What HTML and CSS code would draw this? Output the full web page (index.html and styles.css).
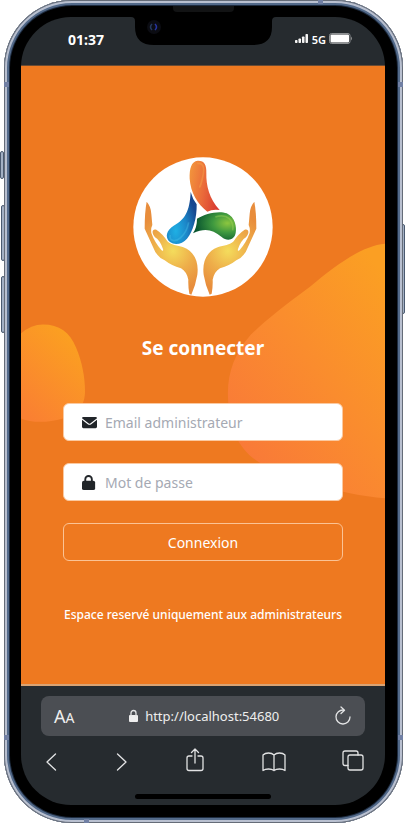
FILE: index.html
```html
<!DOCTYPE html>
<html lang="fr">
<head>
<meta charset="utf-8">
<meta name="viewport" content="width=device-width, initial-scale=1">
<title>Se connecter</title>
<link rel="stylesheet" href="styles.css">
</head>
<body>
<div class="phone">
  <span class="key key-mute"></span>
  <span class="key key-up"></span>
  <span class="key key-down"></span>
  <span class="key key-power"></span>
  <div class="frame">
    <span class="band band-tl"></span><span class="band band-tr"></span>
    <span class="band band-bl"></span><span class="band band-br"></span>
    <span class="band band-top"></span><span class="band band-bottom"></span>
    <div class="notch">
      <svg viewBox="0 0 145 46" aria-hidden="true">
        <path d="M0 17V6H145V17Q141 17 141 21V27Q141 45 122 45H23Q4 45 4 27V21Q4 17 0 17Z" fill="#000"/>
        <path d="M42 6H103V8Q103 12 99 12H46Q42 12 42 8Z" fill="#121314"/>
        <circle cx="23" cy="27" r="7" fill="#0b0c12"/>
        <path d="M21 24Q18 27 21 30" fill="none" stroke="#26395c" stroke-width="1.5"/>
        <path d="M24 24Q27 27 24 30" fill="none" stroke="#2634a0" stroke-width="1.5"/>
      </svg>
    </div>
    <div class="screen">
      <header class="status">
        <span class="clock">01:37</span>
        <span class="signals">
          <svg width="14" height="10" viewBox="0 0 14 10" fill="#f4f4f4" aria-hidden="true"><rect x="0" y="6" width="2.500" height="3" rx=".7"/><rect x="3.500" y="4.500" width="2.500" height="4.500" rx=".7"/><rect x="7" y="2.500" width="2.500" height="6.500" rx=".7"/><rect x="10.500" y="0" width="2.500" height="9" rx=".7"/></svg>
          <span>5G</span>
          <svg width="24" height="12" viewBox="0 0 24 12" aria-hidden="true"><rect x=".5" y=".5" width="20.500" height="10" rx="2" fill="none" stroke="#8d9092"/><rect x="1.500" y="1.500" width="18.500" height="8" rx="1" fill="#fff"/><path d="M22 3.500Q24 5.500 22 7.500Z" fill="#8d9092"/></svg>
        </span>
      </header>

      <main class="page">
        <svg class="blobs" viewBox="0 0 364 619" preserveAspectRatio="none" aria-hidden="true">
          <defs>
            <linearGradient id="big" x1=".85" y1="0" x2=".15" y2=".85"><stop offset="0" stop-color="#fb9f23"/><stop offset="1" stop-color="#f97a38"/></linearGradient>
            <linearGradient id="small" x1=".8" y1="0" x2=".2" y2="1"><stop offset="0" stop-color="#fba31f"/><stop offset="1" stop-color="#fa8032"/></linearGradient>
          </defs>
          <path fill="url(#big)" d="M364 178C342 180 318 197 289 221C262 241 243 256 230 269C213 288 206 309 207 332C208 364 218 384 238 397C262 411 320 430 364 433Z"/>
          <path fill="url(#small)" d="M0 268Q10 259 22 259C38 259 49 267 55 282C61 296 64 312 64 326C64 342 54 350 42 353C25 358 10 357 0 353Z"/>
        </svg>

        <svg class="logo" viewBox="25 36 420 420" role="img" aria-label="Logo">
          <defs>
            <linearGradient id="red" x1="0" y1=".3" x2="1" y2=".6"><stop offset="0" stop-color="#f2923c"/><stop offset=".5" stop-color="#ea6a3a"/><stop offset="1" stop-color="#d93b31"/></linearGradient>
            <radialGradient id="blue" cx=".3" cy=".75" r=".75"><stop offset="0" stop-color="#1fb0e4"/><stop offset=".5" stop-color="#1b86c8"/><stop offset="1" stop-color="#17478f"/></radialGradient>
            <radialGradient id="green" cx=".8" cy=".4" r=".75"><stop offset="0" stop-color="#8cc63f"/><stop offset=".45" stop-color="#3f993f"/><stop offset="1" stop-color="#09552f"/></radialGradient>
            <radialGradient id="gold" gradientUnits="userSpaceOnUse" cx="145" cy="318" r="120"><stop offset="0" stop-color="#f4dc5c"/><stop offset=".5" stop-color="#eeae4a"/><stop offset="1" stop-color="#e88d3c"/></radialGradient>
            <g id="hand">
              <path fill="url(#gold)" d="M66 170Q79 184 80 207L83 240Q78 250 80 264Q90 292 110 315C113 319 117 318 115 312Q106 286 91 277C79 263 83 250 95 254Q116 268 128 289C139 300 157 301 176 307C209 320 223 350 218 389Q213 420 200 449L194 446Q190 424 191 404Q186 380 169 370Q140 362 120 346Q95 335 85 306Q73 279 60 251Q60 201 66 170Z"/>
            </g>
          </defs>
          <circle cx="235" cy="246" r="209" fill="#fff"/>
          <path fill="url(#red)" d="M219 47C239 46 246 60 245 84C244 121 254 162 285 195Q263 192 248 200C218 176 198 143 195 101C194 71 200 49 219 47Z"/>
          <path d="M218 56C238 51 240 73 234 96C231 112 229 119 224 128" fill="none" stroke="#f9b24d" stroke-width="5" opacity=".35"/>
          <path fill="url(#blue)" d="M198 141Q204 163 216 178C217 218 205 260 187 281C173 297 151 302 136 291C119 276 126 255 147 242C181 224 195 199 198 141Z"/>
          <path d="M137 270C131 287 152 293 168 278Q187 260 192 232" fill="none" stroke="#5ad0ee" stroke-width="5" opacity=".3"/>
          <path fill="url(#green)" d="M205 265Q217 247 217 221C241 206 283 196 306 205C331 216 337 247 333 264C329 286 307 290 291 276C263 254 242 248 205 265Z"/>
          <path d="M272 216Q298 208 313 220Q328 233 324 256" fill="none" stroke="#a6d85b" stroke-width="5" opacity=".4"/>
          <use href="#hand"/>
          <use href="#hand" transform="translate(455 0) scale(-1 1)"/>
        </svg>

        <h1>Se connecter</h1>

        <form class="login">
          <label class="field">
            <svg width="15" height="15" viewBox="0 0 16 16" aria-hidden="true"><path fill="#212529" d="M1.500 2h13Q16 2 16 3.500L8.800 9Q8 9.500 7.200 9L0 3.500Q0 2 1.500 2ZM0 5l6.500 5Q8 11 9.500 10L16 5v7.500Q16 14 14.500 14h-13Q0 14 0 12.500Z"/></svg>
            <input type="email" placeholder="Email administrateur" aria-label="Email administrateur">
          </label>
          <label class="field">
            <svg width="15" height="15" viewBox="0 0 16 16" aria-hidden="true"><rect x="0" y="6" width="14" height="10" rx="2" fill="#212529"/><path d="M3.500 7V4.500a3.500 3.500 0 0 1 7 0V7" fill="none" stroke="#212529" stroke-width="2"/></svg>
            <input type="password" placeholder="Mot de passe" aria-label="Mot de passe">
          </label>
          <button type="submit" class="submit">Connexion</button>
        </form>

        <p class="note">Espace reservé uniquement aux administrateurs</p>
      </main>

      <footer class="browser">
        <div class="address">
          <button type="button" class="text-size" aria-label="Taille du texte">A<small>A</small></button>
          <span class="url"><svg width="10" height="14" viewBox="0 0 10 14" aria-hidden="true"><rect x="0" y="6" width="9" height="7" rx="1" fill="#eee"/><path d="M2 7V4a2.500 2.500 0 0 1 5 0v3"/></svg>http://localhost:54680</span>
          <button type="button" aria-label="Actualiser"><svg width="18" height="20" viewBox="0 0 18 20" aria-hidden="true"><path d="M9.500 4A7 7 0 1 0 16 11M7 1l3.500 3.200L7 7.500"/></svg></button>
        </div>
        <nav class="tools">
          <button type="button" aria-label="Précédent"><svg width="14" height="24" viewBox="5 0 14 24"><path d="M15.500 4L7 12l8.500 8"/></svg></button>
          <button type="button" aria-label="Suivant"><svg width="14" height="24" viewBox="5 0 14 24"><path d="M8.500 4L17 12l-8.500 8"/></svg></button>
          <button type="button" aria-label="Partager"><svg width="24" height="24" viewBox="0 0 24 24"><path d="M9 6H6Q4 6 4 8v10.500q0 2 2 2h12q2 0 2-2V8q0-2-2-2h-3M12 13V-1M8.500 2.500L12-1l3.500 3.500"/></svg></button>
          <button type="button" aria-label="Signets"><svg width="24" height="24" viewBox="0 0 24 24"><path d="M12 20.500V5Q10 3 6.500 3T1 5v15.500q2-1.500 5.500-1.500t5.500 1.500ZM12 5q2-2 5.500-2T23 5v15.500q-2-1.500-5.500-1.500T12 20.500"/></svg></button>
          <button type="button" aria-label="Onglets"><svg width="24" height="24" viewBox="0 0 24 24"><rect x="7" y="5" width="15" height="15" rx="2"/><path d="M7 15.500H4q-2 0-2-2V3q0-2 2-2h11q2 0 2 2v2"/></svg></button>
        </nav>
        <div class="home"></div>
      </footer>
    </div>
  </div>
</div>
</body>
</html>
```
FILE: styles.css
```css
* { box-sizing: border-box; }

body {
  margin: 0;
  background: #fff;
  color: #fff;
  font-family: "Noto Sans", "Open Sans", sans-serif;
}

button {
  margin: 0;
  padding: 0;
  border: 0;
  background: none;
  color: inherit;
  font: inherit;
}

svg { display: block; overflow: visible; }

.phone {
  position: relative;
  display: flex;
  min-height: 100vh;
  padding: 0 2px 0 4px;
}

.frame {
  position: relative;
  flex: 1;
  min-width: 0;
  display: flex;
  padding: 17px 18px 18px 17px;
  border-radius: 68px;
  background: #000;
  box-shadow:
    inset 0 0 0 1px #656c78,
    inset 0 0 0 3px #b9c0d0,
    inset 0 0 0 5px #536a8a,
    inset 0 0 0 6px #1e2c40;
}

.key {
  position: absolute;
  width: 4px;
  border: 1px solid #4b5a70;
  border-radius: 2px;
  background: #a3b0c4;
}
.key-mute { left: 0; top: 151px; height: 28px; }
.key-up { left: 1px; top: 205px; height: 56px; }
.key-down { left: 1px; top: 276px; height: 57px; }
.key-power { right: 0; top: 224px; height: 90px; }

.band { position: absolute; width: 5px; height: 5px; background: #7180a4; }
.band-tl { left: 0; top: 82px; }
.band-tr { right: 0; top: 82px; }
.band-bl { left: 0; bottom: 83px; }
.band-br { right: 0; bottom: 83px; }
.band-top { right: 80px; top: 0; height: 4px; }
.band-bottom { left: 80px; bottom: 0; height: 4px; }

.notch {
  position: absolute;
  top: 0;
  left: 0;
  right: 0;
  z-index: 1;
}
.notch svg { width: 145px; margin: 0 auto; }

.screen {
  flex: 1;
  min-width: 0;
  display: flex;
  flex-direction: column;
  overflow: hidden;
  border-radius: 50px;
  background: #262b2f;
}

.status {
  display: flex;
  align-items: center;
  justify-content: space-between;
  height: 49px;
  padding: 0 32px 4px 47px;
  border-bottom: 1px solid #6b4b32;
}
.clock { font-size: 14px; font-weight: 700; }
.signals {
  display: flex;
  align-items: center;
  gap: 3px;
  font-size: 11px;
  font-weight: 600;
}

.page {
  position: relative;
  flex: 1;
  display: flex;
  flex-direction: column;
  align-items: center;
  padding: 91px 42px 0;
  border-bottom: 2px solid #d9a373;
  background: #ee7920;
}
.page > * { position: relative; }
.page > .blobs {
  position: absolute;
  inset: 0;
  width: 100%;
  height: 100%;
}
.logo { width: 140px; height: 140px; }

h1 {
  margin: 37px 0 41px;
  font-size: 19px;
  line-height: 28px;
  font-weight: 700;
}

.login {
  display: flex;
  flex-direction: column;
  gap: 22px;
  width: 100%;
}
.field {
  display: flex;
  align-items: center;
  gap: 8px;
  height: 38px;
  padding: 0 18px;
  border: 1px solid #fbc9a0;
  border-radius: 6px;
  background: #fff;
}
.field input {
  flex: 1;
  min-width: 0;
  padding: 0;
  border: 0;
  outline: 0;
  background: none;
  color: #212529;
  font: inherit;
  font-size: 14px;
}
.field input::placeholder { color: #a5a9b3; opacity: 1; }
.submit {
  height: 38px;
  border: 1px solid #fbc394;
  border-radius: 6px;
  font-size: 14px;
}
.note {
  margin: 44px 0 0;
  font-size: 12px;
  font-weight: 500;
  line-height: 20px;
  white-space: nowrap;
}

.browser {
  height: 119px;
  padding: 10px 20px 0;
}
.browser svg {
  fill: none;
  stroke: #e2e3e4;
  stroke-width: 1.3;
  stroke-linecap: round;
  stroke-linejoin: round;
}
.browser .url rect { stroke: none; }
.address {
  display: flex;
  align-items: center;
  justify-content: space-between;
  height: 40px;
  padding: 0 13px;
  border-radius: 8px;
  background: #4b4e53;
  color: #eee;
}
.text-size { font-size: 18px; }
.text-size small { font-size: 14px; }
.url {
  display: flex;
  align-items: center;
  gap: 6px;
  font-size: 13px;
}
.tools {
  display: flex;
  justify-content: space-between;
  margin-top: 14px;
  padding-left: 4px;
}
.home {
  width: 136px;
  height: 5px;
  margin: 20px auto 0;
  border-radius: 3px;
  background: #000;
}
```
